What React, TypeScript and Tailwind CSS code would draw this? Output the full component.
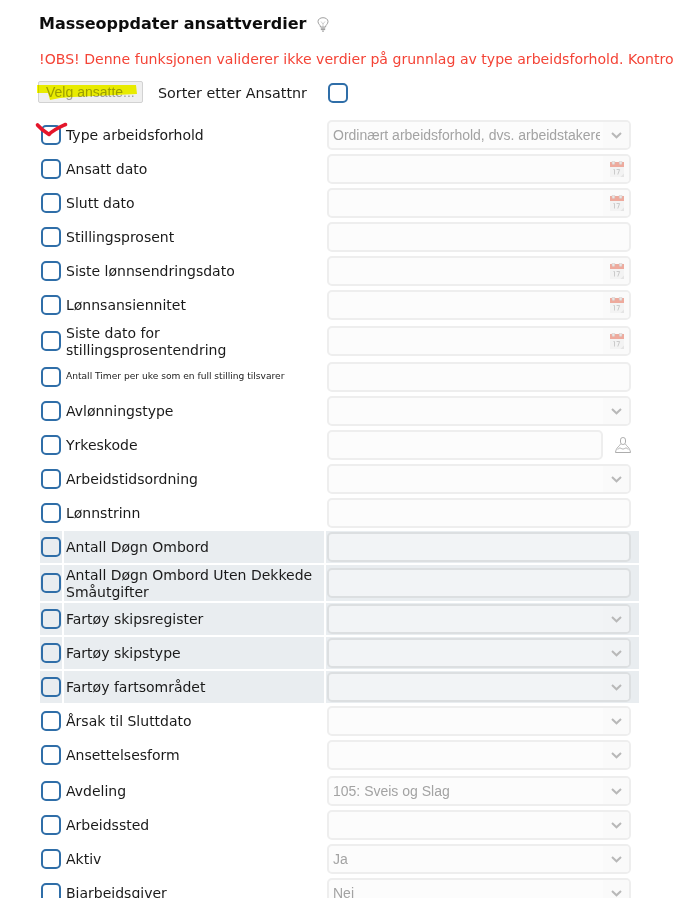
import React from "react";

type Kind = "select" | "date" | "text" | "person";
type Row = { label: string; kind: Kind; value?: string; tall?: boolean; small?: boolean; shaded?: boolean; form?: boolean };

const rows: Row[] = [
  { label: "Type arbeidsforhold", kind: "select", value: "Ordinært arbeidsforhold, dvs. arbeidstakere som er ansatt" },
  { label: "Ansatt dato", kind: "date" },
  { label: "Slutt dato", kind: "date" },
  { label: "Stillingsprosent", kind: "text" },
  { label: "Siste lønnsendringsdato", kind: "date" },
  { label: "Lønnsansiennitet", kind: "date" },
  { label: "Siste dato for stillingsprosentendring", kind: "date", tall: true },
  { label: "Antall Timer per uke som en full stilling tilsvarer", kind: "text", small: true },
  { label: "Avlønningstype", kind: "select" },
  { label: "Yrkeskode", kind: "person" },
  { label: "Arbeidstidsordning", kind: "select" },
  { label: "Lønnstrinn", kind: "text" },
  { label: "Antall Døgn Ombord", kind: "text", shaded: true },
  { label: "Antall Døgn Ombord Uten Dekkede Småutgifter", kind: "text", shaded: true, tall: true },
  { label: "Fartøy skipsregister", kind: "select", shaded: true },
  { label: "Fartøy skipstype", kind: "select", shaded: true },
  { label: "Fartøy fartsområdet", kind: "select", shaded: true },
  { label: "Årsak til Sluttdato", kind: "select" },
  { label: "Ansettelsesform", kind: "select", form: true },
  { label: "Avdeling", kind: "select", value: "105: Sveis og Slag" },
  { label: "Arbeidssted", kind: "select" },
  { label: "Aktiv", kind: "select", value: "Ja" },
  { label: "Bjarbeidsgiver", kind: "select", value: "Nei" },
];

function Check() {
  return <span className="block w-5 h-5 shrink-0 rounded-[5px] border-2 border-[#2f6ea8] bg-transparent" />;
}

function Chevron() {
  return (
    <svg width="11" height="7" viewBox="0 0 11 7" fill="none" className="block">
      <path d="M1 1 L5.5 5.3 L10 1" stroke="#b8b8b8" strokeWidth="2" />
    </svg>
  );
}

function Calendar() {
  return (
    <svg width="14" height="16" viewBox="0 0 14 16" className="block">
      <rect x="0" y="1" width="14" height="15" fill="#f3f3f3" />
      <rect x="0" y="1" width="14" height="5" fill="#eeaa9d" />
      <rect x="2" y="0" width="2.8" height="3.4" rx="1" fill="#ebe6e4" stroke="#cfc6c4" strokeWidth="0.5" />
      <rect x="9.2" y="0" width="2.8" height="3.4" rx="1" fill="#ebe6e4" stroke="#cfc6c4" strokeWidth="0.5" />
      <path d="M3.5 8.5 h1 v5 M6.6 8.5 h3 l-1.8 5" fill="none" stroke="#c6c6c6" strokeWidth="0.9" />
      <path d="M10.5 16 L14 12.5 V16 Z" fill="#e4e4e4" />
    </svg>
  );
}

function Person() {
  return (
    <svg width="16" height="16" viewBox="0 0 16 16" fill="none" className="block">
      <rect x="5.5" y="0.5" width="5" height="7" rx="2.4" stroke="#adadad" strokeWidth="1" />
      <path d="M5.5 7 C4.8 9 1 10.5 0.5 15.5 H15.5 C15 10.5 11.2 9 10.5 7 M2.8 12.5 C5 9.5 6 12 8 12 C10 12 11 9.5 13.2 12.5" stroke="#adadad" strokeWidth="1" />
    </svg>
  );
}

function Bulb() {
  return (
    <svg width="12" height="15" viewBox="0 0 12 15" fill="none" className="block">
      <path d="M3.5 10 C3.5 8 1 7 1 4.6 C1 2.2 3.2 0.7 6 0.7 C8.8 0.7 11 2.2 11 4.6 C11 7 8.5 8 8.5 10 Z" stroke="#a0a0a0" strokeWidth="1" />
      <path d="M4 4.5 L6 7 L8 4.5 M6 7 V10" stroke="#bcbcbc" strokeWidth="0.7" />
      <path d="M3.8 11.2 H8.2 M3.8 12.6 H8.2 M5 14.1 H7" stroke="#989898" strokeWidth="1" />
    </svg>
  );
}

function Field({ row }: { row: Row }) {
  const shell = row.shaded ? "bg-[#f2f4f6] border-[#dcdfe1]" : "bg-[#fcfcfc] border-[#eeeeee]";
  const sideShade = row.shaded ? "bg-[#f1f3f5]" : "bg-[#fafafa]";
  return (
    <div className="flex items-center gap-[12px] w-[304px]">
      <div className={`flex-1 min-w-0 h-[30px] flex rounded-[5px] border-2 overflow-hidden ${shell}`}>
        <div className="flex-1 min-w-0 ml-[4px] mr-[3px] flex items-center overflow-hidden whitespace-nowrap text-[14px] text-[#a3a3a3] font-['Liberation_Sans',Arial,sans-serif]">
          {row.value}
        </div>
        {row.kind === "select" && (
          <div className={`w-[26px] shrink-0 pl-[1px] flex items-center justify-center ${sideShade}`}>
            <Chevron />
          </div>
        )}
        {row.kind === "date" && (
          <div className={`w-[26px] shrink-0 pl-[1px] flex items-center justify-center ${sideShade}`}>
            <Calendar />
          </div>
        )}
      </div>
      {row.kind === "person" && (
        <div className="shrink-0">
          <Person />
        </div>
      )}
    </div>
  );
}

function FormRow({ row }: { row: Row }) {
  const height = row.tall ? "h-[36px]" : row.form ? "h-[34px]" : "h-[32px]";
  const cell = row.shaded ? "bg-[#e9edf0]" : "";
  return (
    <div className={`flex gap-[2px] ${height}`}>
      <div className={`w-[22px] shrink-0 flex justify-center ${cell} ${row.form ? "items-start pt-[6px]" : "items-center"}`}>
        <Check />
      </div>
      <div
        className={`w-[260px] shrink-0 pl-[2px] flex leading-[17px] text-[#1a1a1a] ${cell} ${row.form ? "items-start pt-[8px]" : "items-center"} ${row.tall ? "pt-[2px]" : ""} ${row.small ? "text-[9.1px] pb-[2px]" : "text-[14px]"}`}
      >
        <span>{row.label}</span>
      </div>
      <div className={`w-[313px] shrink-0 pl-[1px] flex ${cell} ${row.form ? "items-start pt-[1px]" : "items-center"}`}>
        <Field row={row} />
      </div>
    </div>
  );
}

export default function App() {
  return (
    <div className="relative h-[898px] w-[674px] overflow-hidden bg-white font-['DejaVu_Sans',Verdana,sans-serif]">
      <div className="pl-[39px] pt-[14px]">
        <div className="flex items-center h-[20px]">
          <h1 className="text-[16px] font-bold leading-[20px] text-[#0d0d0d]">Masseoppdater ansattverdier</h1>
          <span className="ml-[11px]"><Bulb /></span>
        </div>
        <div className="mt-[15px] h-[20px] whitespace-nowrap text-[14.08px] leading-[20px] text-[#f44336]">
          !OBS! Denne funksjonen validerer ikke verdier på grunnlag av type arbeidsforhold. Kontro
        </div>
        <div className="mt-[12px] flex items-center h-[22px]">
          <button className="relative -ml-[1px] w-[105px] h-[22px] rounded-[2px] border border-[#d2d2d2] bg-[#efefef] text-left pl-[7px] text-[14px] leading-[20px] text-[#a0a0a0] font-['Liberation_Sans',Arial,sans-serif]">
            Velg ansatte...
            <svg className="absolute -left-[2px] -top-[1px] mix-blend-multiply" width="105" height="22" viewBox="0 0 105 22">
              <path d="M0 4 L99 4 L100 13 L36 16 L23 17 L13 19 L11 12 L0 12 Z" fill="#f8fb00" />
            </svg>
          </button>
          <span className="ml-[15px] text-[14.3px] leading-[24px] translate-y-[1px] text-[#1a1a1a]">Sorter etter Ansattnr</span>
          <span className="ml-[21px] translate-y-[1px]"><Check /></span>
        </div>
      </div>
      <div className="mt-[16px] ml-[40px] flex flex-col gap-[2px]">
        {rows.map((r) => (
          <FormRow key={r.label} row={r} />
        ))}
      </div>
      <svg className="absolute left-[34px] top-[120px]" width="36" height="18" viewBox="0 0 36 18" fill="none">
        <path d="M3.5 5 C6 8 11 12 15 14.5 C19 10 26 7 31.5 4.5" stroke="#e4162b" strokeWidth="3.6" strokeLinecap="round" strokeLinejoin="round" />
      </svg>
    </div>
  );
}
